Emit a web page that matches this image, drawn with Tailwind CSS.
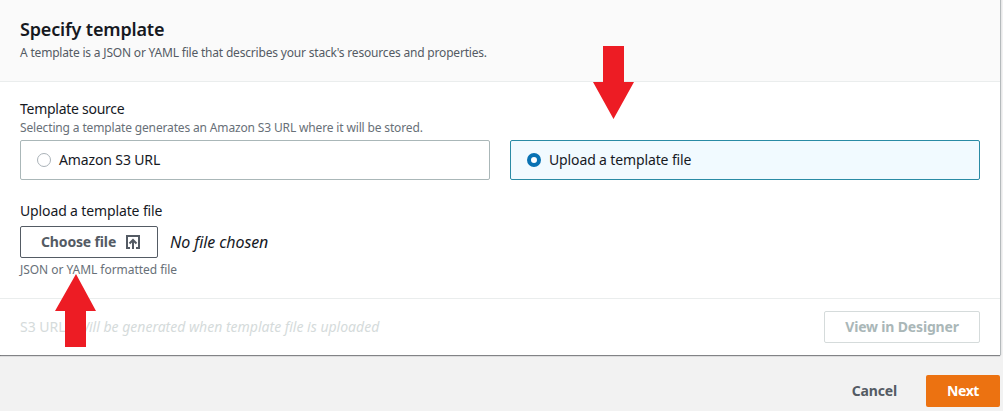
<!DOCTYPE html>
<html lang="en">
<head>
<meta charset="utf-8">
<title>Specify template</title>
<script src="https://cdn.jsdelivr.net/npm/@tailwindcss/browser@4"></script>
</head>
<body class="relative h-[411px] w-[1003px] overflow-hidden bg-[#f2f2f2] font-['Noto_Sans',sans-serif] text-[#16191f] whitespace-nowrap">
  <main class="flex h-[355px] w-[1000px] flex-col bg-white shadow-[1px_0_1px_0_#b5babc,0_1px_1px_0_#77797b]">
    <header class="h-[82px] border-b border-[#eaeded] bg-[#fafafa] pl-5 pt-[17px]">
      <h1 class="text-[18px] leading-6 font-semibold tracking-[-0.16px]">Specify template</h1>
      <p class="mt-[2px] text-[12px] leading-5 tracking-[-0.19px] text-[#545b64]">A template is a JSON or YAML file that describes your stack's resources and properties.</p>
    </header>
    <section class="h-[217px] border-b border-[#eaeded] px-5 pt-[17px]">
      <h2 class="text-[14px] leading-5 tracking-[-0.27px]">Template source</h2>
      <p class="text-[12px] leading-[18px] tracking-[-0.15px] text-[#687078]">Selecting a template generates an Amazon S3 URL where it will be stored.</p>
      <div class="mt-[3px] grid grid-cols-2 gap-5">
        <label class="flex h-10 items-center gap-2 rounded-[2px] border border-[#aab7b8] pl-4">
          <span class="h-[14px] w-[14px] rounded-full border border-[#aab2b8] bg-white"></span>
          <span class="-mt-px text-[14px] tracking-[-0.13px]">Amazon S3 URL</span>
        </label>
        <label class="flex h-10 items-center gap-2 rounded-[2px] border border-[#2a8ba5] bg-[#f1faff] pl-4">
          <span class="h-[14px] w-[14px] rounded-full border-4 border-[#0972b3] bg-white"></span>
          <span class="-mt-px text-[14px] tracking-[-0.13px]">Upload a template file</span>
        </label>
      </div>
      <h2 class="mt-[21px] text-[14px] leading-5 tracking-[-0.13px]">Upload a template file</h2>
      <div class="mt-[5px] flex h-8 items-center gap-3">
        <button class="flex h-8 w-[138px] items-center rounded-[2px] border border-[#545b64] pl-5 text-[14px] font-bold text-[#545b64]">
          <span class="-mt-[2px] w-[84px] text-left tracking-[-0.15px]">Choose file</span>
          <svg class="h-4 w-4" viewBox="0 0 16 16" fill="none" stroke="#545b64" stroke-width="2"><path d="M5 14H2V2h12v12h-3M8 15V6M4.500 9.500 8 6l3.500 3.500"/></svg>
        </button>
        <span class="-mt-[1px] text-[16px] italic tracking-[-0.1px]">No file chosen</span>
      </div>
      <p class="mt-[3px] text-[12px] leading-[18px] tracking-[-0.04px] text-[#687078]">JSON or YAML formatted file</p>
    </section>
    <footer class="flex flex-1 items-center justify-between px-5 text-[14px]">
      <p class="-mt-[1px] flex text-[#d5dbdb]"><span class="w-[57px]">S3 URL:</span><em>Will be generated when template file is uploaded</em></p>
      <button class="h-8 w-[156px] rounded-[2px] border border-[#d5dbdb] pb-px font-bold tracking-[-0.17px] text-[#aab7b8]">View in Designer</button>
    </footer>
  </main>
  <div class="mt-5 flex w-[1000px] items-center justify-end text-[14px] font-bold">
    <button class="mr-[29px] pb-[2px] tracking-[-0.15px] text-[#545b64]">Cancel</button>
    <button class="h-8 w-[74px] rounded-[2px] bg-[#ec7211] pb-[2px] tracking-[-0.4px] text-white">Next</button>
  </div>
  <svg class="absolute left-[593px] top-[46px] h-[73px] w-[41px]" viewBox="0 0 41 73" fill="#ed1c24"><path d="M10 0h21v36h10L20.500 73 0 36h10z"/></svg>
  <svg class="absolute left-[55px] top-[274px] h-[73px] w-[41px]" viewBox="0 0 41 73" fill="#ed1c24"><path d="M21 0 41 37H31v36H10V37H0z"/></svg>
</body>
</html>
